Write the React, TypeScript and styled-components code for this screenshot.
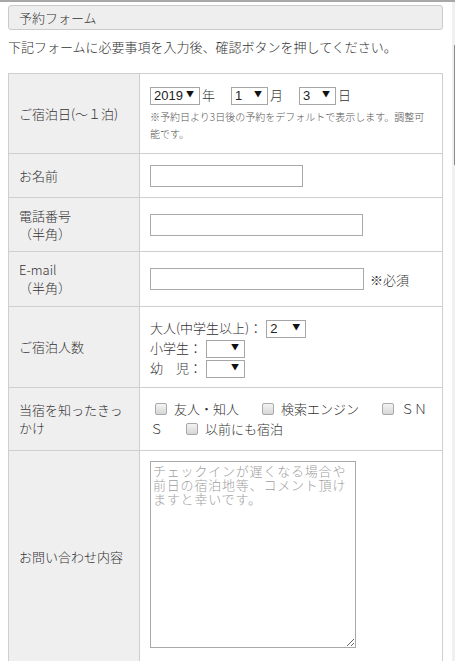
import React from "react";
import styled, { createGlobalStyle } from "styled-components";

const GlobalStyle = createGlobalStyle`
  html, body {
    margin: 0;
    padding: 0;
    background: #fff;
  }
  body {
    font-family: "Noto Sans CJK JP", "Noto Sans", sans-serif;
    font-size: 13px;
    font-weight: 300;
    color: #333;
  }
`;

const Frame = styled.div`
  display: flex;
  border-top: 2px solid #a8a8a8;
  min-height: 659px;
`;

const Main = styled.div`
  flex: 1;
  padding: 3px 9px 0 8px;
`;

const ScrollTrack = styled.div`
  width: 3px;
  background: #f0f0f0;
  display: flex;
  justify-content: flex-end;
`;

const ScrollThumb = styled.div`
  width: 1px;
  margin-top: 43px;
  height: 120px;
  background: #8a8a8a;
`;

const Heading = styled.h2`
  margin: 0;
  height: 23px;
  line-height: 23px;
  padding-left: 10px;
  font-size: 13px;
  font-weight: 300;
  color: #333;
  background: #eeeeee;
  border: 1px solid #cacaca;
  border-radius: 3px;
`;

const Intro = styled.p`
  margin: 7px 0 16px;
  line-height: 20px;
`;

const FormTable = styled.table`
  width: 100%;
  border-collapse: collapse;
  table-layout: fixed;
`;

const Row = styled.tr<{ $h: number }>`
  height: ${(p) => p.$h}px;
`;

const LabelCell = styled.th`
  width: 110px;
  padding: 0 10px;
  background: #efefef;
  border: 1px solid #cfcfcf;
  font-weight: 300;
  text-align: left;
  vertical-align: middle;
  line-height: 18px;
  color: #333;
`;

const FieldCell = styled.td`
  padding: 10px;
  border: 1px solid #cfcfcf;
  vertical-align: middle;
`;

const TopCell = styled(FieldCell)`
  vertical-align: top;
`;

const Line = styled.div`
  display: flex;
  align-items: center;
  height: 20px;
`;

const Unit = styled.span`
  margin: 0 16px 0 2px;
`;

const SelectWrap = styled.span<{ $w: number }>`
  position: relative;
  display: inline-block;
  width: ${(p) => p.$w}px;
  height: 18px;
`;

const Select = styled.select`
  appearance: none;
  -webkit-appearance: none;
  width: 100%;
  height: 100%;
  margin: 0;
  padding: 0 0 0 3px;
  border: 1px solid #a6a6a6;
  border-radius: 0;
  background: #fff;
  font-family: "Liberation Sans", sans-serif;
  font-size: 13px;
  line-height: 16px;
  color: #222;
`;

const Arrow = styled.span`
  position: absolute;
  right: 6px;
  top: 4px;
  font-size: 8px;
  line-height: 10px;
  color: #111;
  pointer-events: none;
`;

const Note = styled.p`
  margin: 4px 0 0;
  font-size: 10px;
  line-height: 17px;
  color: #555;
`;

const TextInput = styled.input<{ $w: number }>`
  box-sizing: border-box;
  width: ${(p) => p.$w}px;
  height: 22px;
  margin: 0;
  padding: 0 4px;
  border: 1px solid #a9a9a9;
  border-radius: 0;
  vertical-align: middle;
`;

const Required = styled.span`
  margin-left: 6px;
  vertical-align: middle;
`;

const PeopleLabel = styled.span`
  margin-right: 4px;
`;

const Options = styled.div`
  line-height: 20px;
`;

const Option = styled.label`
  margin-right: 18px;
`;

const Check = styled.input`
  appearance: none;
  -webkit-appearance: none;
  width: 12px;
  height: 12px;
  margin: 0 7px 0 5px;
  border: 1px solid #a8a8a8;
  border-radius: 2px;
  background: linear-gradient(#f4f4f4, #d6d6d6);
  vertical-align: -1px;
`;

const Comment = styled.textarea`
  box-sizing: border-box;
  display: block;
  width: 206px;
  height: 187px;
  margin: 0;
  padding: 2px 2px;
  border: 1px solid #a9a9a9;
  border-radius: 0;
  font-family: "Noto Sans CJK JP", monospace;
  font-size: 13px;
  font-weight: 300;
  letter-spacing: 0.8px;
  line-height: 14px;
  resize: both;
  &::placeholder {
    color: #a0a0a0;
  }
`;

const Dropdown: React.FC<{ w: number; value?: string; options: string[] }> = ({
  w,
  value,
  options,
}) => (
  <SelectWrap $w={w}>
    <Select defaultValue={value ?? ""}>
      {options.map((o) => (
        <option key={o} value={o}>
          {o}
        </option>
      ))}
    </Select>
    <Arrow>▼</Arrow>
  </SelectWrap>
);

const nums = (n: number) => Array.from({ length: n }, (_, i) => String(i + 1));

const App: React.FC = () => {
  const sources = ["友人・知人", "検索エンジン", "ＳＮＳ", "以前にも宿泊"];
  return (
    <>
      <GlobalStyle />
      <Frame>
        <Main>
          <Heading>予約フォーム</Heading>
          <Intro>下記フォームに必要事項を入力後、確認ボタンを押してください。</Intro>
          <FormTable>
            <tbody>
              <Row $h={80}>
                <LabelCell>ご宿泊日(～１泊)</LabelCell>
                <TopCell>
                  <Line>
                    <Dropdown w={50} value="2019" options={["2019", "2020"]} />
                    <Unit>年</Unit>
                    <Dropdown w={37} value="1" options={nums(12)} />
                    <Unit>月</Unit>
                    <Dropdown w={37} value="3" options={nums(31)} />
                    <Unit>日</Unit>
                  </Line>
                  <Note>
                    ※予約日より3日後の予約をデフォルトで表示します。調整可能です。
                  </Note>
                </TopCell>
              </Row>
              <Row $h={44}>
                <LabelCell>お名前</LabelCell>
                <FieldCell>
                  <TextInput $w={153} type="text" />
                </FieldCell>
              </Row>
              <Row $h={54}>
                <LabelCell>
                  電話番号
                  <br />
                  （半角）
                </LabelCell>
                <FieldCell>
                  <TextInput $w={213} type="tel" />
                </FieldCell>
              </Row>
              <Row $h={55}>
                <LabelCell>
                  E-mail
                  <br />
                  （半角）
                </LabelCell>
                <FieldCell>
                  <TextInput $w={214} type="email" />
                  <Required>※必須</Required>
                </FieldCell>
              </Row>
              <Row $h={81}>
                <LabelCell>ご宿泊人数</LabelCell>
                <FieldCell>
                  <Line>
                    <PeopleLabel>大人(中学生以上)：</PeopleLabel>
                    <Dropdown w={40} value="2" options={nums(9)} />
                  </Line>
                  <Line>
                    <PeopleLabel>小学生：</PeopleLabel>
                    <Dropdown w={39} options={["", ...nums(9)]} />
                  </Line>
                  <Line>
                    <PeopleLabel>幼　児：</PeopleLabel>
                    <Dropdown w={39} options={["", ...nums(9)]} />
                  </Line>
                </FieldCell>
              </Row>
              <Row $h={63}>
                <LabelCell>当宿を知ったきっかけ</LabelCell>
                <FieldCell>
                  <Options>
                    {sources.map((s) => (
                      <Option key={s}>
                        <Check type="checkbox" />
                        {s}
                      </Option>
                    ))}
                  </Options>
                </FieldCell>
              </Row>
              <Row $h={212}>
                <LabelCell>お問い合わせ内容</LabelCell>
                <TopCell>
                  <Comment placeholder="チェックインが遅くなる場合や前日の宿泊地等、コメント頂けますと幸いです。" />
                </TopCell>
              </Row>
            </tbody>
          </FormTable>
        </Main>
        <ScrollTrack>
          <ScrollThumb />
        </ScrollTrack>
      </Frame>
    </>
  );
};

export default App;
